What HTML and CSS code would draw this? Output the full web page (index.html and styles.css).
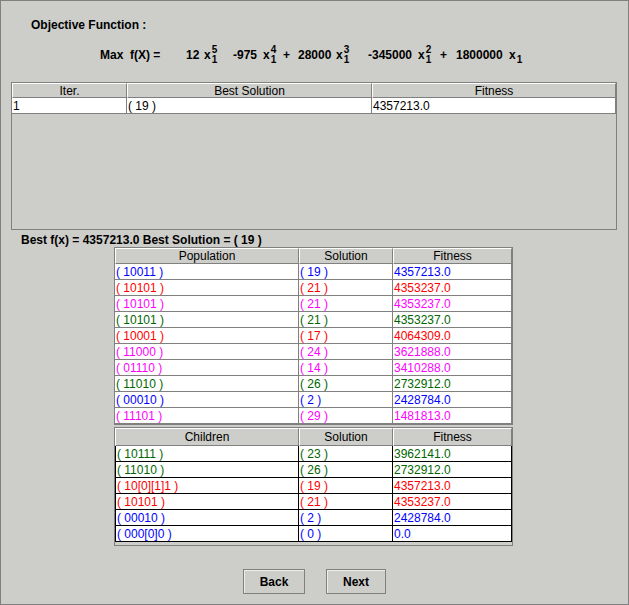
FILE: index.html
```html
<!DOCTYPE html>
<html>
<head>
<meta charset="utf-8">
<link rel="stylesheet" href="styles.css">
</head>
<body>
<div class="frame">
  <div class="title">Objective Function :</div>
  <div class="formula">
    <span class="t w30">Max</span>
    <span class="t w56">f(X) =</span>
    <span class="t w18">12</span>
    <span class="t w29">x<span class="sc"><span class="sup">5</span><span class="sub">1</span></span></span>
    <span class="t w30">-975</span>
    <span class="t w20">x<span class="sc"><span class="sup">4</span><span class="sub">1</span></span></span>
    <span class="t w15">+</span>
    <span class="t w38">28000</span>
    <span class="t w32">x<span class="sc"><span class="sup">3</span><span class="sub">1</span></span></span>
    <span class="t w50">-345000</span>
    <span class="t w22">x<span class="sc"><span class="sup">2</span><span class="sub">1</span></span></span>
    <span class="t w16">+</span>
    <span class="t w53">1800000</span>
    <span class="t">x<span class="sc"><span class="sup">&nbsp;</span><span class="sub">1</span></span></span>
  </div>

  <div class="pane">
    <div class="row top-cols">
      <div class="hc">Iter.</div>
      <div class="hc">Best Solution</div>
      <div class="hc">Fitness</div>
    </div>
    <div class="row top-cols data">
      <div class="c">1</div>
      <div class="c">( 19 )</div>
      <div class="c">4357213.0</div>
    </div>
  </div>

  <div class="best">Best f(x) = 4357213.0 Best Solution = ( 19 )</div>

  <div class="box pop">
    <div class="row pop-cols">
      <div class="hc">Population</div>
      <div class="hc">Solution</div>
      <div class="hc">Fitness</div>
    </div>
    <div class="row pop-cols data blue"><div class="c">( 10011 )</div><div class="c">( 19 )</div><div class="c">4357213.0</div></div>
    <div class="row pop-cols data red"><div class="c">( 10101 )</div><div class="c">( 21 )</div><div class="c">4353237.0</div></div>
    <div class="row pop-cols data mag"><div class="c">( 10101 )</div><div class="c">( 21 )</div><div class="c">4353237.0</div></div>
    <div class="row pop-cols data green"><div class="c">( 10101 )</div><div class="c">( 21 )</div><div class="c">4353237.0</div></div>
    <div class="row pop-cols data red"><div class="c">( 10001 )</div><div class="c">( 17 )</div><div class="c">4064309.0</div></div>
    <div class="row pop-cols data mag"><div class="c">( 11000 )</div><div class="c">( 24 )</div><div class="c">3621888.0</div></div>
    <div class="row pop-cols data mag"><div class="c">( 01110 )</div><div class="c">( 14 )</div><div class="c">3410288.0</div></div>
    <div class="row pop-cols data green"><div class="c">( 11010 )</div><div class="c">( 26 )</div><div class="c">2732912.0</div></div>
    <div class="row pop-cols data blue"><div class="c">( 00010 )</div><div class="c">( 2 )</div><div class="c">2428784.0</div></div>
    <div class="row pop-cols data mag"><div class="c">( 11101 )</div><div class="c">( 29 )</div><div class="c">1481813.0</div></div>
  </div>

  <div class="box child">
    <div class="row child-head">
      <div class="hc">Children</div>
      <div class="hc">Solution</div>
      <div class="hc">Fitness</div>
    </div>
    <div class="row child-cols data green"><div class="c">( 10111 )</div><div class="c">( 23 )</div><div class="c">3962141.0</div></div>
    <div class="row child-cols data green"><div class="c">( 11010 )</div><div class="c">( 26 )</div><div class="c">2732912.0</div></div>
    <div class="row child-cols data red"><div class="c">( 10[0][1]1 )</div><div class="c">( 19 )</div><div class="c">4357213.0</div></div>
    <div class="row child-cols data red"><div class="c">( 10101 )</div><div class="c">( 21 )</div><div class="c">4353237.0</div></div>
    <div class="row child-cols data blue"><div class="c">( 00010 )</div><div class="c">( 2 )</div><div class="c">2428784.0</div></div>
    <div class="row child-cols data blue"><div class="c">( 000[0]0 )</div><div class="c">( 0 )</div><div class="c">0.0</div></div>
  </div>

  <div class="buttons">
    <button class="btn back">Back</button>
    <button class="btn next">Next</button>
  </div>
</div>
</body>
</html>
```

FILE: styles.css
```css
* { box-sizing: border-box; }
html, body { margin: 0; padding: 0; }
body {
  width: 629px;
  height: 605px;
  overflow: hidden;
  background: #cdcdc9;
  font-family: "Liberation Sans", Arial, sans-serif;
  font-size: 12px;
  color: #000;
}
.frame {
  width: 629px;
  height: 605px;
  border: 1px solid #808080;
  display: flex;
  flex-direction: column;
  align-items: flex-start;
}
.title {
  font-weight: bold;
  line-height: 14px;
  margin: 17px 0 0 30px;
}
.formula {
  display: flex;
  align-items: baseline;
  font-weight: bold;
  line-height: 14px;
  white-space: nowrap;
  height: 20px;
  margin: 13px 0 0 99px;
}
.t { flex: none; display: block; }
.w15 { width: 15px; } .w16 { width: 16px; } .w18 { width: 18px; }
.w20 { width: 20px; } .w22 { width: 22px; } .w29 { width: 29px; }
.w30 { width: 30px; } .w32 { width: 32px; } .w38 { width: 38px; }
.w50 { width: 50px; } .w53 { width: 53px; } .w56 { width: 56px; }
.sc {
  display: inline-block;
  vertical-align: -4px;
  margin-left: 1px;
}
.sup { display: block; font-size: 10px; line-height: 9px; }
.sub { display: block; font-size: 10px; line-height: 12px; }

.pane {
  margin: 17px 0 0 10px;
  width: 606px;
  height: 148px;
  border: 1px solid #808080;
}
.row { display: grid; }
.top-cols { grid-template-columns: 115px 245px 244px; }
.pop-cols { grid-template-columns: 184px 94px 119px; }
.child-head { grid-template-columns: 184px 94px 119px; }
.child-cols { grid-template-columns: 183px 94px 119px; border-left: 1px solid #000; }

.hc {
  border-top: 1px solid #fff;
  border-left: 1px solid #fff;
  border-right: 1px solid #808080;
  border-bottom: 1px solid #808080;
  text-align: center;
  white-space: nowrap;
  overflow: hidden;
}
.top-cols .hc { height: 15px; padding-top: 1px; line-height: 12px; }
.pop-cols .hc { height: 16px; line-height: 14px; }
.child-head .hc { height: 18px; padding-top: 1px; line-height: 15px; }

.data .c {
  background: #fff;
  height: 16px;
  padding: 1px 0 0 1px;
  line-height: 14px;
  border-right: 1px solid #808080;
  border-bottom: 1px solid #808080;
  white-space: nowrap;
  overflow: hidden;
}
.child-cols .c { border-right-color: #000; border-bottom-color: #000; }

.blue { color: #0000ff; }
.red { color: #ff0000; }
.mag { color: #ff00ff; }
.green { color: #006600; }

.best {
  font-weight: bold;
  line-height: 14px;
  margin: 3px 0 0 20px;
}
.box {
  margin-left: 113px;
  width: 399px;
  border: 1px solid #808080;
}
.pop { margin-top: 0; }
.child { margin-top: 2px; padding-bottom: 3px; }

.buttons {
  align-self: stretch;
  display: flex;
  justify-content: center;
  gap: 21px;
  margin-top: 23px;
}
.btn {
  height: 25px;
  padding: 0;
  margin: 0;
  background: #cdcdc9;
  border: 1px solid #808080;
  box-shadow: inset 1px 1px 0 #ececea;
  font-family: "Liberation Sans", Arial, sans-serif;
  font-size: 12px;
  font-weight: bold;
  color: #000;
}
.back { width: 62px; }
.next { width: 60px; }
```
